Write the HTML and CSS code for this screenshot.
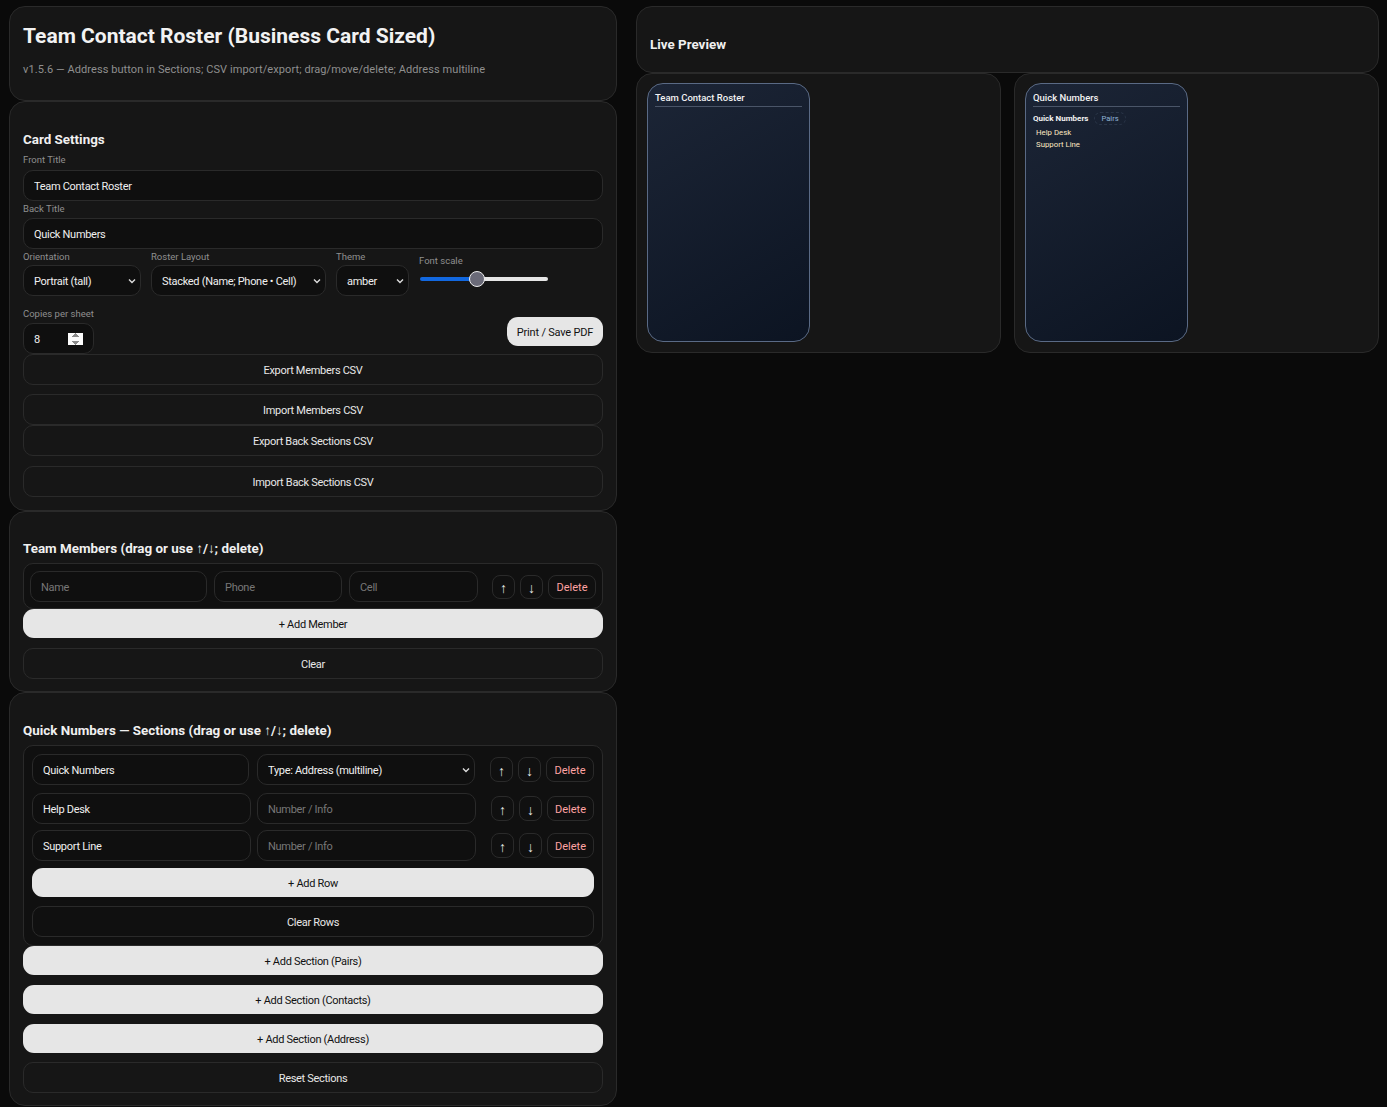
FILE: index.html
```html
<!DOCTYPE html>
<html lang="en">
<head>
    <meta charset="UTF-8">
    <meta name="viewport" content="width=device-width, initial-scale=1.0">
    <title>Team Contact Roster</title>
    <link rel="stylesheet" href="styles.css">
</head>
<body>
    <div class="layout">
        <!-- Left column: editors -->
        <div class="col">
            <div class="panel panel-head">
                <h1>Team Contact Roster (Business Card Sized)</h1>
                <p class="sub">v1.5.6 — Address button in Sections; CSV import/export; drag/move/delete; Address multiline</p>
            </div>

            <div class="panel panel-settings">
                <h2>Card Settings</h2>
                <label class="lbl">Front Title</label>
                <input class="field" type="text" value="Team Contact Roster">
                <label class="lbl">Back Title</label>
                <input class="field" type="text" value="Quick Numbers">

                <div class="opts">
                    <div class="opt opt-orient">
                        <label class="lbl">Orientation</label>
                        <select class="field"><option>Portrait (tall)</option></select>
                    </div>
                    <div class="opt opt-layout">
                        <label class="lbl">Roster Layout</label>
                        <select class="field"><option>Stacked (Name; Phone • Cell)</option></select>
                    </div>
                    <div class="opt opt-theme">
                        <label class="lbl">Theme</label>
                        <select class="field"><option>amber</option></select>
                    </div>
                    <div class="opt opt-scale">
                        <label class="lbl">Font scale</label>
                        <input class="scale" type="range" min="0" max="100" value="44">
                    </div>
                </div>

                <div class="copies-row">
                    <div>
                        <label class="lbl">Copies per sheet</label>
                        <input class="field copies" type="number" value="8">
                    </div>
                    <button class="btn btn-light btn-print">Print / Save PDF</button>
                </div>

                <button class="btn btn-ghost">Export Members CSV</button>
                <button class="btn btn-ghost mt9">Import Members CSV</button>
                <button class="btn btn-ghost">Export Back Sections CSV</button>
                <button class="btn btn-ghost mt10">Import Back Sections CSV</button>
            </div>

            <div class="panel panel-team">
                <h2>Team Members (drag or use ↑/↓; delete)</h2>
                <div class="box box-team">
                    <div class="row-team">
                        <input class="field" type="text" placeholder="Name">
                        <input class="field" type="text" placeholder="Phone">
                        <input class="field" type="text" placeholder="Cell">
                        <div class="acts">
                            <button class="mini">↑</button>
                            <button class="mini">↓</button>
                            <button class="mini mini-del">Delete</button>
                        </div>
                    </div>
                </div>
                <button class="btn btn-light">+ Add Member</button>
                <button class="btn btn-ghost mt10">Clear</button>
            </div>

            <div class="panel panel-sections">
                <h2>Quick Numbers — Sections (drag or use ↑/↓; delete)</h2>
                <div class="box box-sections">
                    <div class="row-sec row-first">
                        <input class="field" type="text" value="Quick Numbers">
                        <select class="field"><option>Type: Address (multiline)</option></select>
                        <div class="acts">
                            <button class="mini">↑</button>
                            <button class="mini">↓</button>
                            <button class="mini mini-del">Delete</button>
                        </div>
                    </div>
                    <div class="row-sec">
                        <input class="field" type="text" value="Help Desk">
                        <input class="field" type="text" placeholder="Number / Info">
                        <div class="acts">
                            <button class="mini">↑</button>
                            <button class="mini">↓</button>
                            <button class="mini mini-del">Delete</button>
                        </div>
                    </div>
                    <div class="row-sec">
                        <input class="field" type="text" value="Support Line">
                        <input class="field" type="text" placeholder="Number / Info">
                        <div class="acts">
                            <button class="mini">↑</button>
                            <button class="mini">↓</button>
                            <button class="mini mini-del">Delete</button>
                        </div>
                    </div>
                    <button class="btn btn-light mt7">+ Add Row</button>
                    <button class="btn btn-ghost mt9">Clear Rows</button>
                </div>
                <button class="btn btn-light">+ Add Section (Pairs)</button>
                <button class="btn btn-light mt10">+ Add Section (Contacts)</button>
                <button class="btn btn-light mt10">+ Add Section (Address)</button>
                <button class="btn btn-ghost mt9">Reset Sections</button>
            </div>
        </div>

        <!-- Right column: preview -->
        <div class="col">
            <div class="panel panel-live">
                <h2>Live Preview</h2>
            </div>
            <div class="previews">
                <div class="panel panel-prev">
                    <div class="bizcard">
                        <div class="bizcard-title">Team Contact Roster</div>
                    </div>
                </div>
                <div class="panel panel-prev">
                    <div class="bizcard">
                        <div class="bizcard-title">Quick Numbers</div>
                        <div class="sec-head">
                            <span class="sec-name">Quick Numbers</span>
                            <span class="sec-tag">Pairs</span>
                        </div>
                        <div class="sec-line">Help Desk</div>
                        <div class="sec-line">Support Line</div>
                    </div>
                </div>
            </div>
        </div>
    </div>
</body>
</html>
```

FILE: styles.css
```css
/* Dark roster editor */
* {
    box-sizing: border-box;
}

body {
    margin: 0;
    padding: 6px 8px 0 9px;
    background-color: #0a0a0a;
    color: #e8e8e8;
    font-family: Roboto, "Noto Sans", Arial, sans-serif;
    font-size: 12px;
}

.layout {
    display: grid;
    grid-template-columns: 608px 1fr;
    gap: 19px;
    align-items: start;
}

.col {
    display: flex;
    flex-direction: column;
}

.panel {
    background-color: #161616;
    border: 1px solid #2a2a2a;
    border-radius: 16px;
    padding: 0 13px;
}

h1 {
    margin: 0;
    font-size: 21px;
    line-height: 28px;
    font-weight: 700;
    color: #f2f2f2;
}

h2 {
    margin: 0;
    font-size: 13.4px;
    line-height: 18px;
    font-weight: 700;
    color: #f0f0f0;
}

.sub {
    margin: 13px 0 0;
    font-size: 11px;
    line-height: 14px;
    letter-spacing: 0.08px;
    color: #8f8f8f;
}

.panel-head {
    height: 95px;
    padding-top: 15px;
}

.panel-settings {
    height: 410px;
    padding-top: 29px;
}

.panel-team {
    height: 181px;
    padding-top: 28px;
}

.panel-sections {
    height: 414px;
    padding-top: 29px;
}

.lbl {
    display: block;
    font-size: 9.5px;
    line-height: 12px;
    color: #8f8f8f;
}

.panel-settings h2 {
    margin-bottom: 5px;
}

.field {
    display: block;
    width: 100%;
    height: 31px;
    padding: 2px 10px 0;
    background-color: #0f0f0f;
    border: 1px solid #2a2a2a;
    border-radius: 10px;
    color: #f0f0f0;
    font-family: inherit;
    font-size: 11px;
    letter-spacing: -0.3px;
}

select.field {
    -webkit-appearance: none;
    appearance: none;
    padding-right: 14px;
    background-image: url("data:image/svg+xml,%3Csvg xmlns='http://www.w3.org/2000/svg' width='8' height='6'%3E%3Cpath d='M1 1.5l3 3 3-3' fill='none' stroke='%23ddd' stroke-width='1.4'/%3E%3C/svg%3E");
    background-repeat: no-repeat;
    background-position: right 4px center;
}

.field::placeholder {
    color: #777;
}

.panel-settings > .lbl {
    margin-top: 2px;
    margin-bottom: 3px;
}

.panel-settings > h2 + .lbl {
    margin-bottom: 4px;
}

.opts {
    display: flex;
    margin-top: 2px;
    gap: 10px;
}

.opt .lbl {
    margin-bottom: 2px;
}

.opt-orient {
    width: 118px;
}

.opt-layout {
    width: 175px;
}

.opt-theme {
    width: 73px;
}

.opt-scale {
    width: 129px;
    padding-top: 4px;
}

.opt-scale .lbl {
    margin-bottom: 4px;
}

.scale {
    display: block;
    width: 128px;
    height: 16px;
    margin: 0 0 0 1px;
    -webkit-appearance: none;
    appearance: none;
    background: transparent;
}

.scale::-webkit-slider-runnable-track {
    height: 4px;
    border-radius: 2px;
    background: linear-gradient(to right, #1268e0 45%, #e6e6e6 45%);
}

.scale::-webkit-slider-thumb {
    -webkit-appearance: none;
    width: 16px;
    height: 16px;
    margin-top: -6px;
    border-radius: 50%;
    background-color: #6a6a78;
    border: 1px solid #eee;
}

.copies-row {
    display: flex;
    justify-content: space-between;
    margin-top: 12px;
    height: 46px;
}

.copies-row .lbl {
    margin-bottom: 3px;
}

.copies {
    width: 71px;
}

.copies::-webkit-inner-spin-button {
    opacity: 1;
}

.btn {
    display: block;
    width: 100%;
    padding-top: 3px;
    font-family: inherit;
    font-size: 11px;
    letter-spacing: -0.3px;
    cursor: pointer;
}

.btn-light {
    height: 29px;
    background-color: #e6e6e6;
    color: #111;
    border: none;
    border-radius: 11px;
}

.btn-ghost {
    height: 31px;
    background-color: transparent;
    color: #e8e8e8;
    border: 1px solid #2a2a2a;
    border-radius: 10px;
}

.btn-print {
    width: 96px;
    margin-top: 9px;
    padding: 2px 0 0;
    white-space: nowrap;
    letter-spacing: -0.2px;
}

.mt7 {
    margin-top: 7px;
}

.mt9 {
    margin-top: 9px;
}

.mt10 {
    margin-top: 10px;
}

.box {
    background-color: #101010;
    border: 1px solid #2a2a2a;
    border-radius: 10px;
    margin-top: 5px;
}

.box-team {
    height: 46px;
    padding: 7px 6px;
}

.box-sections {
    height: 201px;
    padding: 8px;
    margin-bottom: 0;
}

.row-team {
    display: grid;
    grid-template-columns: 177px 128px 129px auto;
    gap: 7px;
    align-items: center;
}

.row-sec {
    display: grid;
    grid-template-columns: 219px 219px 1fr;
    gap: 6px;
    align-items: center;
    margin-top: 6px;
}

.row-first {
    grid-template-columns: 217px 218px 1fr;
    gap: 8px;
    margin-top: 0;
    margin-bottom: 8px;
}

.acts {
    display: flex;
    justify-content: flex-end;
    gap: 5px;
    margin-left: 7px;
}

.row-sec .acts {
    margin-left: 0;
}

.mini {
    height: 24px;
    width: 23px;
    padding: 2px 0 0;
    background-color: transparent;
    color: #e8e8e8;
    border: 1px solid #2a2a2a;
    border-radius: 8px;
    font-family: inherit;
    font-size: 14px;
}

.row-sec .mini {
    height: 25px;
}

.mini-del {
    width: 48px;
    padding: 2px 0 0;
    font-size: 11px;
    color: #ffa3a3;
}

.row-sec .mini-del {
    width: 47px;
}

.row-first .mini-del {
    width: 48px;
}

.panel-live {
    height: 67px;
    padding-top: 29px;
}

.previews {
    display: grid;
    grid-template-columns: 1fr 1fr;
    gap: 13px;
}

.panel-prev {
    height: 280px;
    padding: 9px 10px;
}

.bizcard {
    width: 163px;
    height: 259px;
    padding: 8px 7px;
    border: 1px solid #5a6a85;
    border-radius: 16px;
    background: linear-gradient(150deg, #1c2536, #0c1422);
    color: #f2f2f2;
}

.bizcard-title {
    padding-bottom: 2px;
    border-bottom: 1px solid #4a5568;
    font-size: 9.5px;
    line-height: 12px;
    font-weight: 500;
}

.sec-head {
    display: flex;
    align-items: center;
    gap: 6px;
    margin-top: 5px;
}

.sec-name {
    font-size: 8px;
    font-weight: 700;
}

.sec-tag {
    padding: 1px 6px;
    border: 1px dashed #2a3548;
    border-radius: 8px;
    font-size: 7.6px;
    color: #8fb4d8;
}

.sec-line {
    padding-left: 3px;
    font-size: 7.8px;
    line-height: 12px;
    color: #fde7c0;
}

.sec-head + .sec-line {
    margin-top: 2px;
}
```
